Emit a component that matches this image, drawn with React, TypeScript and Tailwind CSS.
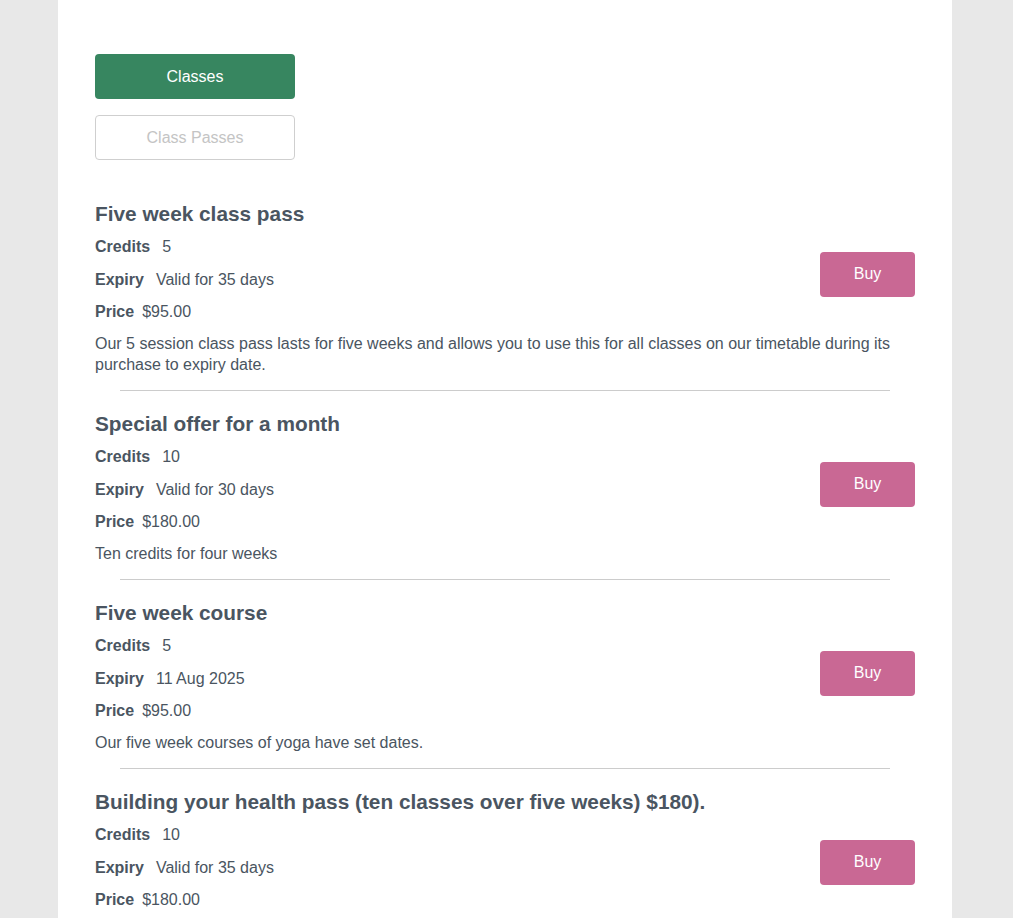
const passes = [
  {
    title: "Five week class pass",
    credits: "5",
    expiry: "Valid for 35 days",
    price: "$95.00",
    description:
      "Our 5 session class pass lasts for five weeks and allows you to use this for all classes on our timetable during its purchase to expiry date.",
  },
  {
    title: "Special offer for a month",
    credits: "10",
    expiry: "Valid for 30 days",
    price: "$180.00",
    description: "Ten credits for four weeks",
  },
  {
    title: "Five week course",
    credits: "5",
    expiry: "11 Aug 2025",
    price: "$95.00",
    description: "Our five week courses of yoga have set dates.",
  },
  {
    title: "Building your health pass (ten classes over five weeks) $180).",
    credits: "10",
    expiry: "Valid for 35 days",
    price: "$180.00",
    description: "Ten classes over five weeks.",
  },
];

export default function App() {
  return (
    <div
      className="min-h-screen bg-[#e8e8e8] text-[#4a5561]"
      style={{ fontFamily: '"Liberation Sans", Arial, sans-serif' }}
    >
      <div className="ml-[58px] min-h-screen w-[894px] bg-white px-[37px] pt-[54px]">
        <div className="flex w-[200px] flex-col gap-4">
          <button
            type="button"
            className="h-[45px] rounded bg-[#378660] text-base text-white"
          >
            Classes
          </button>
          <button
            type="button"
            className="h-[45px] rounded border border-[#cfcfcf] bg-white text-base text-[#c4c4c4]"
          >
            Class Passes
          </button>
        </div>

        <div className="mt-[42px]">
          {passes.map((p, i) => (
            <div key={p.title}>
              {i > 0 ? <div className="mx-[25px] border-t border-[#cccccc]" /> : null}
              <div className={i > 0 ? "pt-[21.5px] pb-[14.5px]" : "pb-[14.5px]"}>
                <h2 className="text-[20.8px] font-bold leading-[24px]">{p.title}</h2>
                <div className="flex items-center justify-between">
                  <div className="text-base leading-[20px]">
                    <div className="mt-[11px]">
                      <span className="mr-[12px] font-bold">Credits</span>
                      {p.credits}
                    </div>
                    <div className="mt-[12.5px]">
                      <span className="mr-[12px] font-bold">Expiry</span>
                      {p.expiry}
                    </div>
                    <div className="mt-[12.5px]">
                      <span className="mr-[8px] font-bold">Price</span>
                      {p.price}
                    </div>
                  </div>
                  <button
                    type="button"
                    className="h-[45px] w-[95px] rounded bg-[#c96894] text-base text-white"
                  >
                    Buy
                  </button>
                </div>
                <p className="mt-[11px] text-base leading-[21px]">{p.description}</p>
              </div>
            </div>
          ))}
        </div>
      </div>
    </div>
  );
}
